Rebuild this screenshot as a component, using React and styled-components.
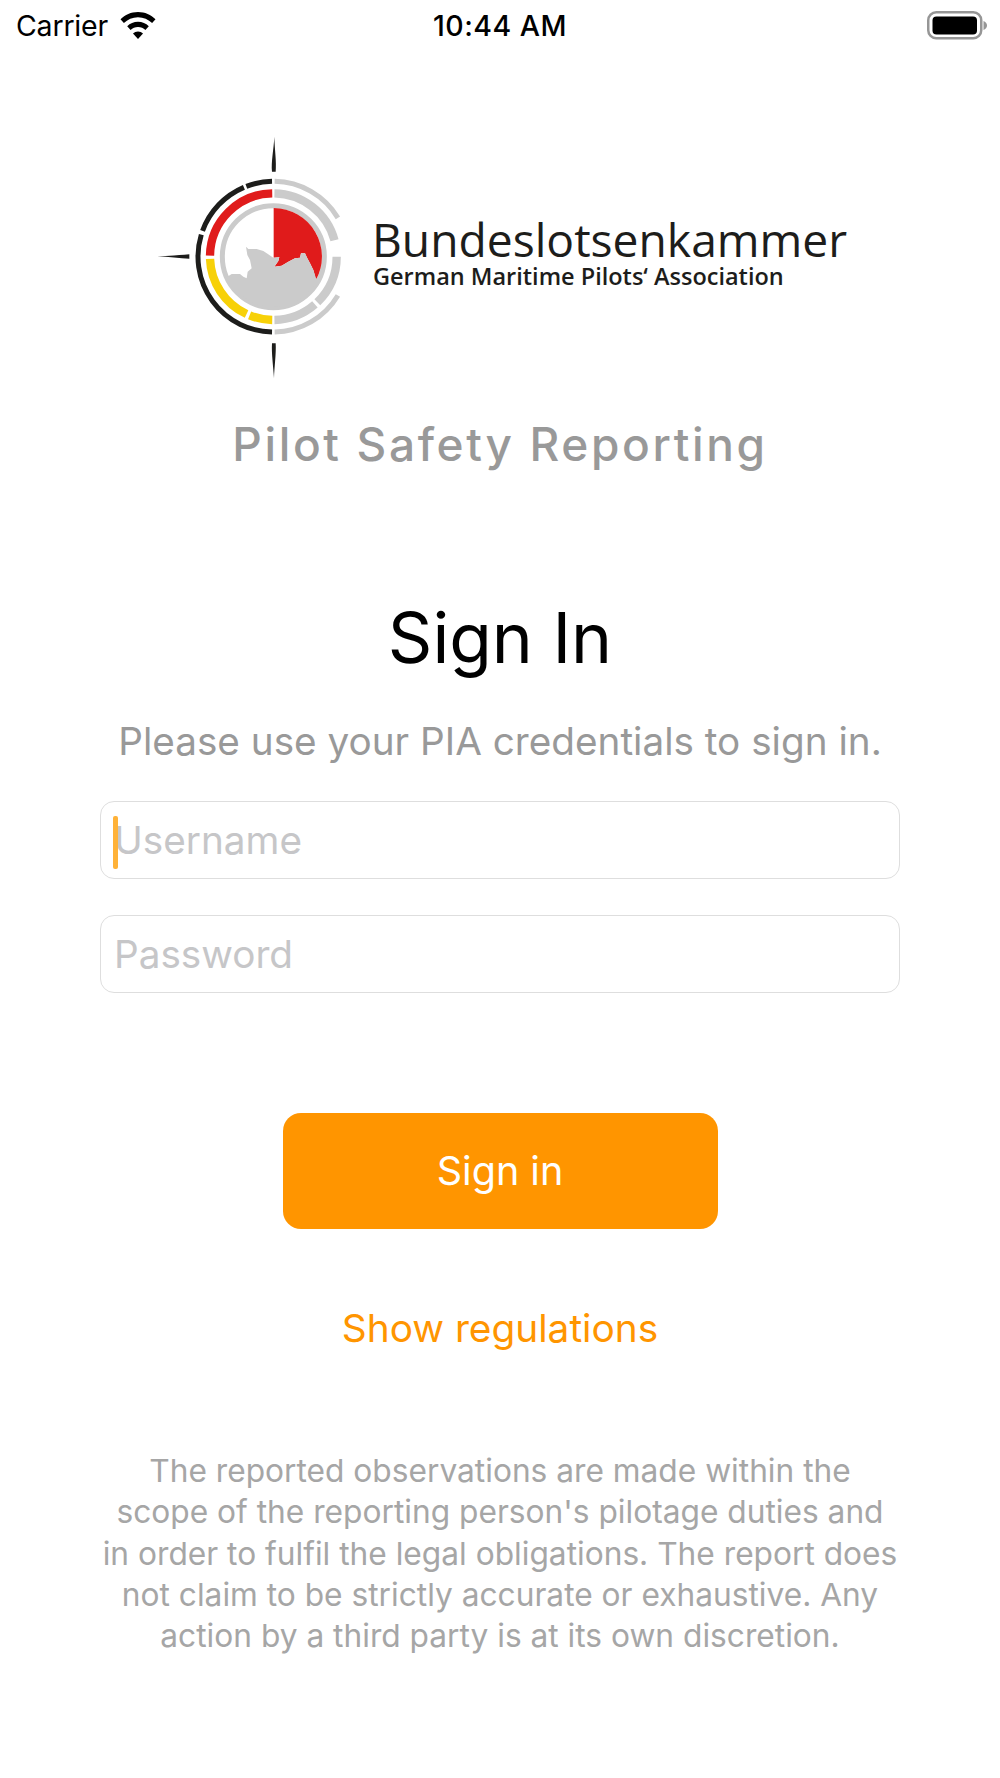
import React from "react";
import styled, { createGlobalStyle } from "styled-components";

const Global = createGlobalStyle`
  html, body { margin: 0; padding: 0; background: #fff; }
  body { font-family: Inter, "Liberation Sans", sans-serif; }
  * { box-sizing: border-box; }
`;

const Page = styled.div`
  width: 1000px;
  height: 1778px;
  background: #fff;
  overflow: hidden;
  display: flex;
  flex-direction: column;
  align-items: center;
`;

const StatusBar = styled.div`
  width: 100%;
  height: 50px;
  display: grid;
  grid-template-columns: 1fr auto 1fr;
  align-items: center;
  padding: 0 13px;
  color: #000;
  font-size: 28.5px;
`;
const StatusLeft = styled.div`
  display: flex;
  align-items: center;
  gap: 12px;
  padding-left: 3px;
  font-weight: 400;
  letter-spacing: -0.2px;
`;
const Time = styled.div`
  font-weight: 500;
  letter-spacing: 0.5px;
`;
const StatusRight = styled.div`
  display: flex;
  justify-content: flex-end;
`;

const LogoRow = styled.div`
  margin-top: 70px;
  width: 100%;
  height: 270px;
  padding-left: 140px;
  display: flex;
  align-items: flex-start;
  gap: 27px;
`;
const LogoText = styled.div`
  margin-top: 94.5px;
  font-family: "Open Sans", sans-serif;
  color: #1d1d1b;
  display: flex;
  flex-direction: column;
`;
const LogoName = styled.div`
  font-size: 46.2px;
  line-height: 50px;
  font-weight: 400;
`;
const LogoTag = styled.div`
  font-size: 23.5px;
  line-height: 23px;
  margin-left: 1px;
  font-weight: 600;
`;

const AppTitle = styled.div`
  margin-top: 27px;
  font-size: 46px;
  line-height: 54px;
  font-weight: 500;
  letter-spacing: 2.65px;
  color: #999;
`;
const Heading = styled.h1`
  margin: 126px 0 0;
  font-size: 69.5px;
  line-height: 82px;
  font-weight: 400;
  color: #000;
`;
const Sub = styled.p`
  margin: 39px 0 0;
  font-size: 38.7px;
  line-height: 46px;
  color: #999;
`;
const Fields = styled.div`
  margin-top: 37px;
  width: 800px;
  display: flex;
  flex-direction: column;
  gap: 36px;
`;
const FieldWrap = styled.div`
  position: relative;
  height: 78px;
`;
const Field = styled.input`
  width: 100%;
  height: 100%;
  border: 1.5px solid #dedede;
  border-radius: 14px;
  background: #fff;
  padding: 0 14px 0 13px;
  font: 400 38.7px Inter, sans-serif;
  outline: none;
  &::placeholder { color: #c6c6c8; opacity: 1; }
`;
const Caret = styled.span`
  position: absolute;
  left: 13px;
  top: 15px;
  width: 4.5px;
  height: 53px;
  border-radius: 2px;
  background: #ffb238;
`;
const SignIn = styled.button`
  margin-top: 120px;
  width: 435px;
  height: 116px;
  border: 0;
  border-radius: 18px;
  background: #ff9500;
  color: #fff;
  font: 400 39.5px Inter, sans-serif;
`;
const LinkButton = styled.button`
  margin-top: 74px;
  border: 0;
  padding: 0;
  background: none;
  color: #ff9500;
  font: 400 38.8px/50px Inter, sans-serif;
`;
const Disclaimer = styled.p`
  margin: 97px 0 0;
  width: 796px;
  text-align: center;
  font-size: 31.7px;
  line-height: 41.3px;
  color: #a6a6a6;
`;

const Wifi = () => (
  <svg width="36" height="27" viewBox="0 0 36 27">
    <path d="M18 0C11 0 5 2.800 .5 7.200l3.400 3.800C7.600 7.400 12.500 5.200 18 5.200s10.400 2.200 14.100 5.800l3.400-3.800C31 2.800 25 0 18 0z" />
    <path d="M18 9.800c-4.200 0-8 1.700-10.800 4.400l3.400 3.800c1.900-1.800 4.500-3 7.400-3s5.500 1.200 7.400 3l3.400-3.800C26 11.500 22.200 9.800 18 9.800z" />
    <path d="M18 19.500c-2 0-3.700.8-5 2l5 5.500 5-5.500c-1.300-1.200-3-2-5-2z" />
  </svg>
);

const Battery = () => (
  <svg width="60" height="29" viewBox="0 0 60 29">
    <rect x="1.250" y="1.250" width="53" height="26" rx="8" fill="none" stroke="#969696" strokeWidth="2.500" />
    <rect x="5.500" y="5.500" width="44.500" height="18" rx="4" fill="#000" />
    <path d="M56.500 10c2 .7 3.500 2.400 3.500 4.500S58.500 18.300 56.500 19z" fill="#969696" />
  </svg>
);

const arc = (r, a0, a1) => {
  const p = (a) => {
    const t = (a * Math.PI) / 180;
    return `${(400 + r * Math.sin(t)).toFixed(1)} ${(410 - r * Math.cos(t)).toFixed(1)}`;
  };
  const large = Math.abs(a1 - a0) > 180 ? 1 : 0;
  const sweep = a1 > a0 ? 1 : 0;
  return `M${p(a0)}A${r} ${r} 0 ${large} ${sweep} ${p(a1)}`;
};

const rings = [
  [226, -1, -21, "#1d1d1b", 15],
  [226, -23, -70, "#1d1d1b", 15],
  [226, -73, -179, "#1d1d1b", 15],
  [190, -1, -89, "#e01b1b", 25],
  [190, -92, -155, "#f7d108", 25],
  [190, -158, -179, "#f7d108", 25],
  [226, 1, 59, "#cbcbcb", 15],
  [226, 121, 179, "#cbcbcb", 15],
  [190, 1, 75, "#cbcbcb", 25],
  [190, 90, 136, "#cbcbcb", 25],
  [190, 139, 179, "#cbcbcb", 25],
];

const coast =
  "323 455 335 445 330 420 322 405 318 380 325 387 350 387 370 393 400 413 418 412 415 423 403 440 425 437 445 425 465 415 480 413 483 400 495 400 502 415 510 430 520 450 528 475";

const Logo = () => (
  <svg width="205" height="270" viewBox="0 0 615 810">
    <path d="M403 50C404 90 410 125 407 155H396C393 125 401 90 403 50z" fill="#1d1d1b" />
    <path d="M402 775C403 740 409 700 407 670H396C394 700 400 740 402 775z" fill="#1d1d1b" />
    <path d="M52 409C85 409 120 405 148 403V416C120 415 85 411 52 409z" fill="#1d1d1b" />
    {rings.map(([r, a, b, c, w]) => (
      <path key={`${r}${a}`} d={arc(r, a, b)} fill="none" stroke={c} strokeWidth={w} />
    ))}
    <circle cx="400" cy="410" r="153" fill="none" stroke="#cbcbcb" strokeWidth="15" />
    <path
      d="M401 264A146 146 0 0 1 528 480L520 450 510 430 502 415 495 400 483 400 480 413 465 415 445 425 425 437 403 440 415 423 418 412 401 413z"
      fill="#e01b1b"
    />
    <path d={`M262 470L275 462 300 462 310 470 320 475 ${coast} 534 478A150 150 0 0 1 262 470z`} fill="#cbcbcb" />
  </svg>
);

export default function App() {
  return (
    <Page>
      <Global />
      <StatusBar>
        <StatusLeft>
          Carrier
          <Wifi />
        </StatusLeft>
        <Time>10:44 AM</Time>
        <StatusRight>
          <Battery />
        </StatusRight>
      </StatusBar>
      <LogoRow>
        <Logo />
        <LogoText>
          <LogoName>Bundeslotsenkammer</LogoName>
          <LogoTag>German Maritime Pilots‘ Association</LogoTag>
        </LogoText>
      </LogoRow>
      <AppTitle>Pilot Safety Reporting</AppTitle>
      <Heading>Sign In</Heading>
      <Sub>Please use your PIA credentials to sign in.</Sub>
      <Fields>
        <FieldWrap>
          <Field placeholder="Username" />
          <Caret />
        </FieldWrap>
        <FieldWrap>
          <Field placeholder="Password" />
        </FieldWrap>
      </Fields>
      <SignIn>Sign in</SignIn>
      <LinkButton>Show regulations</LinkButton>
      <Disclaimer>
        The reported observations are made within the scope of the reporting person's pilotage duties and in order to fulfil the legal obligations. The report does not claim to be strictly accurate or exhaustive. Any action by a third party is at its own discretion.
      </Disclaimer>
    </Page>
  );
}
